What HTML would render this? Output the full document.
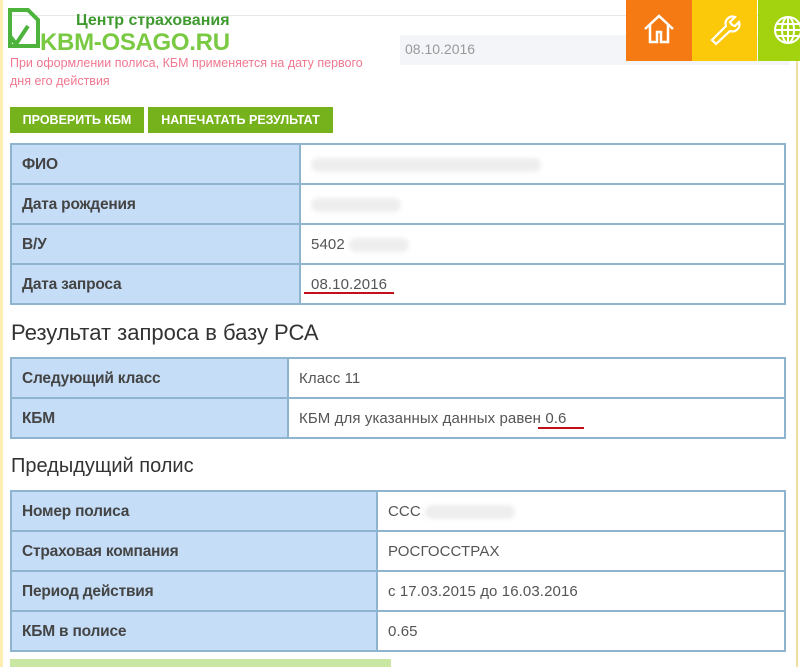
<!DOCTYPE html>
<html><head><meta charset="utf-8"><style>
*{margin:0;padding:0;box-sizing:border-box}
body{width:800px;height:667px;overflow:hidden;background:#fff;font-family:"Liberation Sans","DejaVu Sans",sans-serif;position:relative;color:#333}
.abs{position:absolute}
table{position:absolute;border-collapse:collapse;left:10px;width:776px;border:2px solid #8eb4cf}
td{border:2px solid #8eb4cf;height:40px;font-size:15px;padding:1px 10px 0;vertical-align:middle;line-height:17px}
td.l{background:#c5ddf7;font-weight:bold;color:#444;font-size:15.5px;letter-spacing:-0.2px}
td.v{background:#fff;color:#555;letter-spacing:0.1px}
.btn{position:absolute;top:107px;height:26px;background:#76b21b;color:#fff;font-weight:bold;font-size:12.5px;line-height:26px;text-align:center}
.blur{display:inline-block;height:14px;background:#eee;border-radius:7px;vertical-align:middle;filter:blur(2px)}
</style></head><body>
<div class="abs" style="left:0;top:0;width:3px;height:667px;background:#fbeeb0"></div>
<div class="abs" style="left:796px;top:60px;width:2px;height:607px;background:#f0dfa0"></div>
<div class="abs" style="left:10px;top:15px;width:390px;height:1px;background:#e8e8e8"></div>
<div class="abs" style="left:400px;top:15px;width:390px;height:1px;background:#e8e8e8"></div>
<div class="abs" style="left:400px;top:35px;width:390px;height:30px;background:#f3f5f8"></div>
<div class="abs" style="left:405px;top:41px;font-size:14px;color:#999">08.10.2016</div>
<svg class="abs" style="left:6px;top:6px" width="36" height="44" viewBox="0 0 36 44"><path d="M4 4h18l10 10v26H4z" fill="none" stroke="#4db33d" stroke-width="4"/><path d="M4 30l6 8 12-18" fill="none" stroke="#4db33d" stroke-width="4"/></svg>
<div class="abs" style="left:76px;top:12px;font-size:16px;font-weight:bold;color:#3e9a2e">Центр страхования</div>
<div class="abs" style="left:40px;top:29px;font-size:24px;font-weight:bold;color:#7ac943;letter-spacing:-0.3px">KBM-OSAGO.RU</div>
<div class="abs" style="left:10px;top:54px;font-size:12.5px;color:#f07890;line-height:18px;width:372px">При оформлении полиса, КБМ применяется на дату первого дня его действия</div>
<div class="btn" style="left:10px;width:134px">ПРОВЕРИТЬ КБМ</div>
<div class="btn" style="left:148px;width:185px">НАПЕЧАТАТЬ РЕЗУЛЬТАТ</div>
<div class="abs" style="left:626px;top:0;width:66px;height:61px;background:#f57a13"></div>
<div class="abs" style="left:692px;top:0;width:65px;height:61px;background:#fcc80a"></div>
<div class="abs" style="left:758px;top:0;width:42px;height:61px;background:#a3d30f"></div>
<svg class="abs" style="left:642px;top:12px" width="34" height="34" viewBox="0 0 34 34" fill="none" stroke="#fff" stroke-width="2.5"><path d="M3 17L17 4l14 13M8 13v17h7V20h4v10h7V13"/></svg>
<svg class="abs" style="left:708px;top:12px" width="34" height="34" viewBox="0 0 34 34" fill="none" stroke="#fff" stroke-width="2.2"><path d="M4 28l14-14a7 7 0 0 1 9-9l-5 5 2 3 3 1 4-4a7 7 0 0 1-9 9L8 32z"/></svg>
<svg class="abs" style="left:772px;top:14px" width="32" height="32" viewBox="0 0 32 32" fill="none" stroke="#fff" stroke-width="2"><circle cx="16" cy="16" r="13"/><ellipse cx="16" cy="16" rx="6" ry="13"/><path d="M3 16h26M5 10h22M5 22h22M16 3v26"/></svg>
<table style="top:143px"><col style="width:289px"><tr><td class="l">ФИО</td><td class="v"><span class="blur" style="width:230px"></span></td></tr>
<tr><td class="l">Дата рождения</td><td class="v"><span class="blur" style="width:90px"></span></td></tr>
<tr><td class="l">В/У</td><td class="v">5402 <span class="blur" style="width:60px"></span></td></tr>
<tr><td class="l">Дата запроса</td><td class="v">08.10.2016</td></tr></table>
<div class="abs" style="left:304px;top:292px;width:90px;height:2px;background:#c0101a"></div>
<div class="abs" style="left:11px;top:320px;font-size:22px;color:#333">Результат запроса в базу РСА</div>
<table style="top:357px"><col style="width:277px"><tr><td class="l">Следующий класс</td><td class="v">Класс 11</td></tr>
<tr><td class="l">КБМ</td><td class="v">КБМ для указанных данных равен 0.6</td></tr></table>
<div class="abs" style="left:538px;top:427px;width:46px;height:2px;background:#c0101a"></div>
<div class="abs" style="left:11px;top:455px;font-size:20px;color:#333">Предыдущий полис</div>
<table style="top:490px"><col style="width:366px"><tr><td class="l">Номер полиса</td><td class="v">ССС <span class="blur" style="width:90px"></span></td></tr>
<tr><td class="l">Страховая компания</td><td class="v">РОСГОССТРАХ</td></tr>
<tr><td class="l">Период действия</td><td class="v">с 17.03.2015 до 16.03.2016</td></tr>
<tr><td class="l">КБМ в полисе</td><td class="v">0.65</td></tr></table>
<div class="abs" style="left:10px;top:659px;width:381px;height:8px;background:#cae6a3"></div>
</body></html>
